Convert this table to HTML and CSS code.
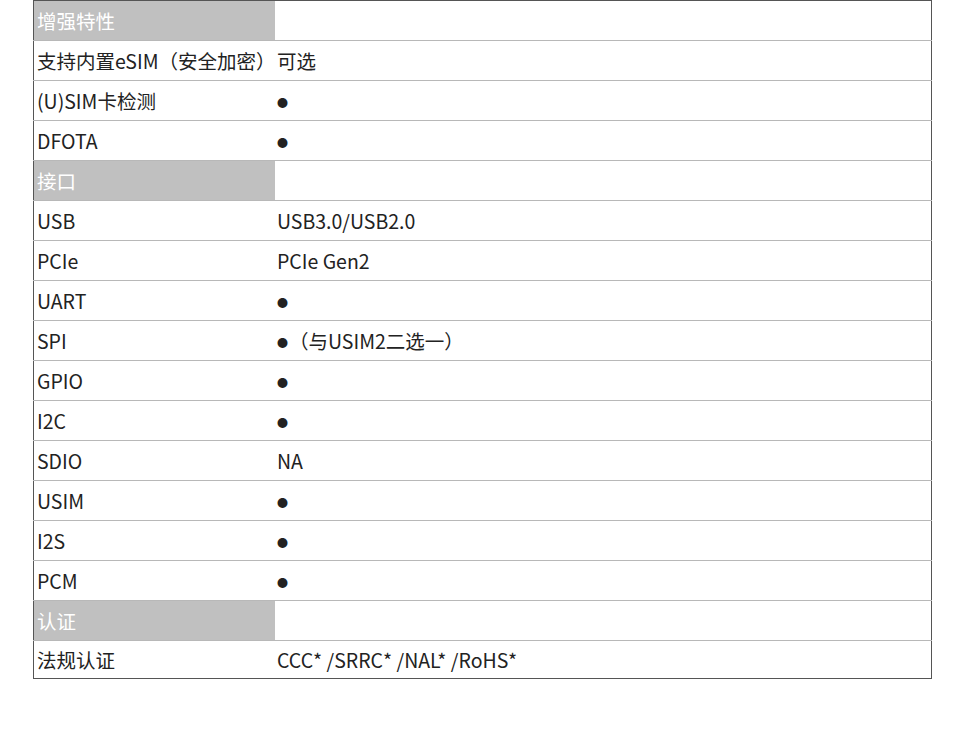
FILE: index.html
```html
<!DOCTYPE html>
<html lang="zh-CN">
<head>
<meta charset="utf-8">
<title>规格</title>
<link rel="stylesheet" href="styles.css">
</head>
<body>
<table class="spec">
  <tr class="sec"><td class="k">增强特性</td><td class="v"></td></tr>
  <tr><td class="k">支持内置eSIM（安全加密）</td><td class="v">可选</td></tr>
  <tr><td class="k">(U)SIM卡检测</td><td class="v"><span class="dot">●</span></td></tr>
  <tr><td class="k">DFOTA</td><td class="v"><span class="dot">●</span></td></tr>
  <tr class="sec"><td class="k">接口</td><td class="v"></td></tr>
  <tr><td class="k">USB</td><td class="v">USB3.0/USB2.0</td></tr>
  <tr><td class="k">PCIe</td><td class="v">PCIe Gen2</td></tr>
  <tr><td class="k">UART</td><td class="v"><span class="dot">●</span></td></tr>
  <tr><td class="k">SPI</td><td class="v"><span class="dot">●</span>（与USIM2二选一）</td></tr>
  <tr><td class="k">GPIO</td><td class="v"><span class="dot">●</span></td></tr>
  <tr><td class="k">I2C</td><td class="v"><span class="dot">●</span></td></tr>
  <tr><td class="k">SDIO</td><td class="v">NA</td></tr>
  <tr><td class="k">USIM</td><td class="v"><span class="dot">●</span></td></tr>
  <tr><td class="k">I2S</td><td class="v"><span class="dot">●</span></td></tr>
  <tr><td class="k">PCM</td><td class="v"><span class="dot">●</span></td></tr>
  <tr class="sec"><td class="k">认证</td><td class="v"></td></tr>
  <tr class="last"><td class="k">法规认证</td><td class="v">CCC* /SRRC* /NAL* /RoHS*</td></tr>
</table>
</body>
</html>
```

FILE: styles.css
```css
html, body {
  margin: 0;
  padding: 0;
  background: #ffffff;
}
body {
  font-family: "Noto Sans CJK SC", "Noto Sans", sans-serif;
  font-size: 19.5px;
  color: #222222;
}
.spec {
  margin-left: 33px;
  width: 899px;
  border-collapse: collapse;
  border: 1px solid #555555;
  table-layout: fixed;
}
.spec td {
  height: 39px;
  padding: 0 0 0 3px;
  vertical-align: middle;
  border-top: 1px solid #b8b8b8;
  white-space: nowrap;
  line-height: 1;
  overflow: visible;
}
.spec tr:first-child td {
  border-top: 1px solid #555555;
}
.spec tr.last td {
  height: 37px;
}
.spec .k {
  width: 238px;
}
.spec .v {
  padding-left: 2px;
}
.sec .k {
  background: #c0c0c0;
  color: #ffffff;
}
.dot {
  font-size: 11px;
  display: inline-block;
  vertical-align: middle;
  margin-right: 1px;
  position: relative;
  top: -1px;
}
```
